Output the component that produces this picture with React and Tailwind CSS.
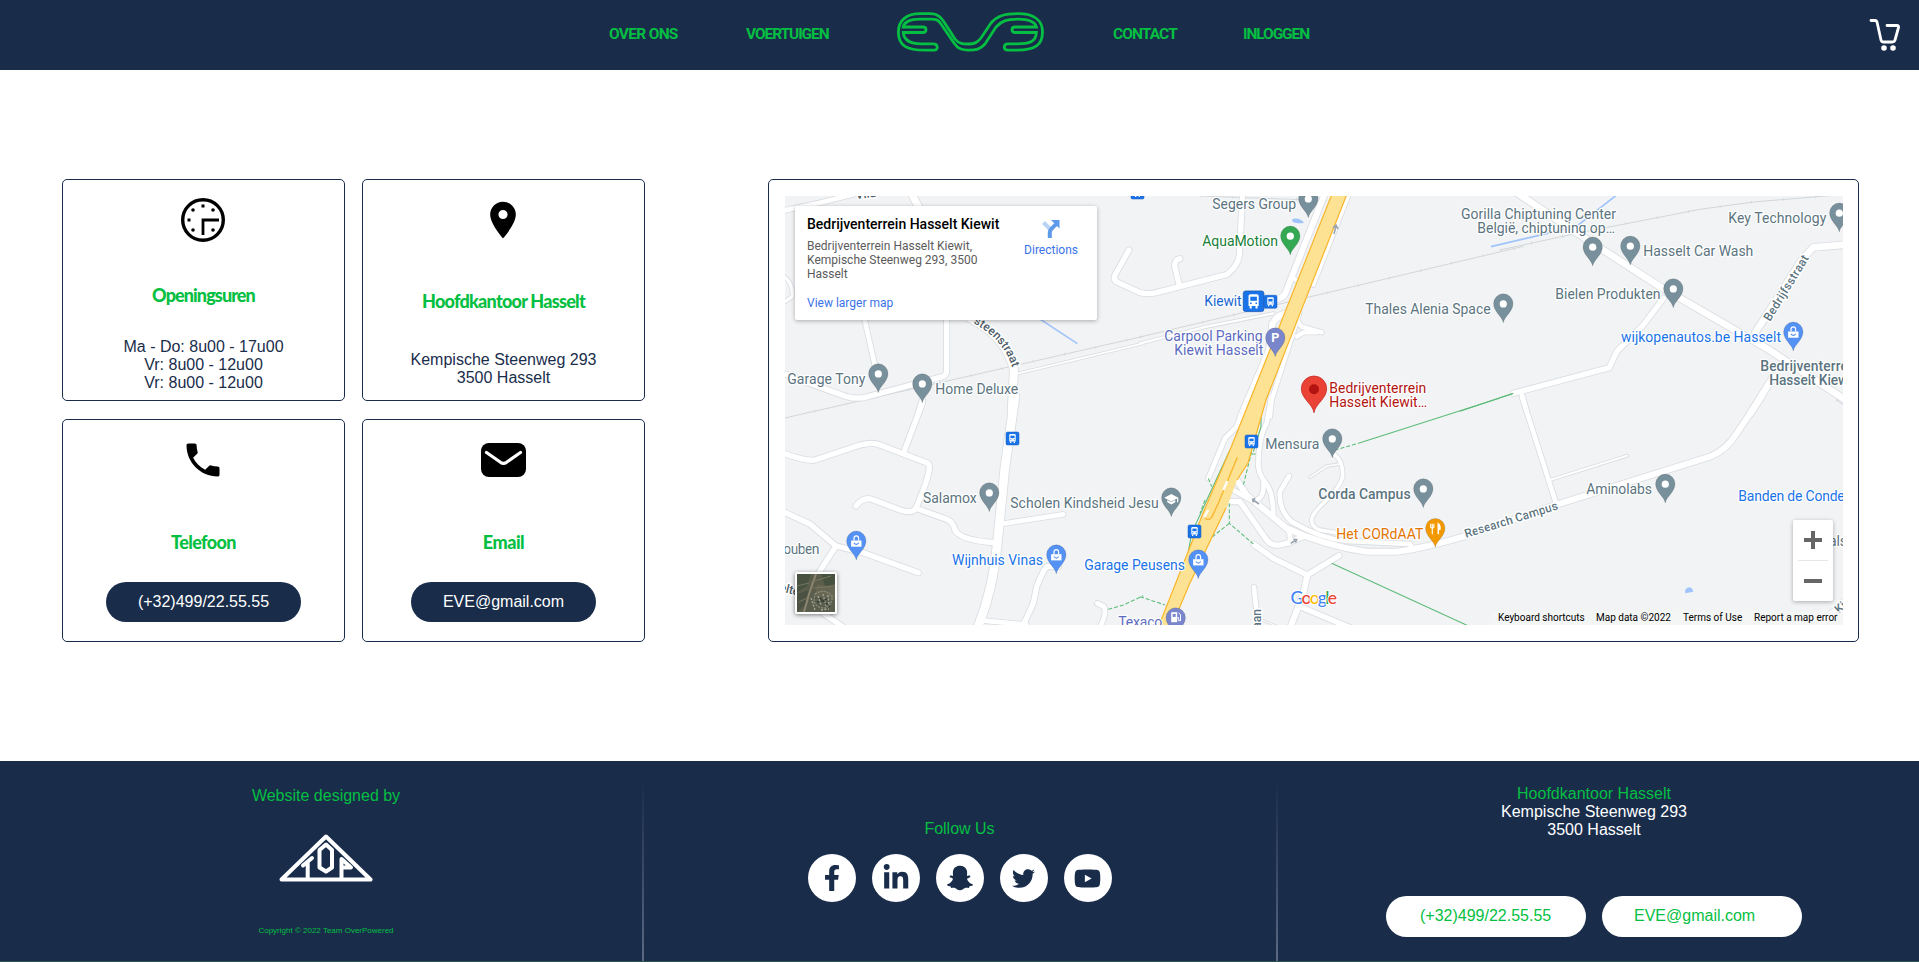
import React from "react";
import { MdLocationOn, MdPhone } from "react-icons/md";
import { FaFacebookF, FaLinkedinIn, FaSnapchatGhost, FaTwitter, FaYoutube } from "react-icons/fa";

/* Map geometry is stored per tile, three units to a pixel. */
const TILES = {
  A: "translate(760 170) scale(.33333)",
  B: "translate(1140 170) scale(.33333)",
  C: "translate(1500 170) scale(.33333)",
  D: "translate(760 400) scale(.33333)",
  E: "translate(1140 400) scale(.33333)",
  F: "translate(1500 400) scale(.33333)",
};

const ROADS = [
  ["A", "M60 124L180 98L300 68", 14],
  ["A", "M452 65L485 130", 22],
  ["A", "M70 318Q100 340 97 380L70 398", 10],
  ["A", "M312 440L350 610", 14],
  ["A", "M560 440V600Q560 615 548 620L330 678Q300 690 260 680Q200 660 70 610", 16],
  ["A", "M630 445Q740 500 762 600L755 725", 24],
  ["A", "M487 690L475 730", 16],
  ["A", "M775 610L1150 520", 5],
  ["A", "M1107 240L1065 315Q1058 330 1075 338L1140 368Q1170 375 1200 365", 16],
  ["B", "M60 365L262 313Q295 285 298 255L308 70", 16],
  ["B", "M118 345L104 290Q104 268 120 266", 16],
  ["B", "M0 520L200 470L400 430", 7],
  ["B", "M555 70L435 372Q428 385 405 388", 18],
  ["B", "M455 320L475 335", 12],
  ["B", "M628 70L520 345", 12],
  ["B", "M430 430Q395 440 400 470M440 425L395 460L385 540L300 740", 14],
  ["B", "M478 430L395 690L390 740M470 450L485 470L545 487M470 500L490 487L530 487", 13],
  ["C", "M50 68L240 195L480 350L800 535L1040 692", 20],
  ["C", "M490 385L430 465L350 545L328 593L40 670", 16],
  ["C", "M65 670L80 725", 14],
  ["C", "M1040 224L940 232L905 270L765 490", 20],
  ["C", "M820 620L750 732", 20],
  ["D", "M487 10L430 160", 16],
  ["D", "M65 158Q140 185 165 180L300 135Q340 125 360 135L500 188Q510 192 508 205Q505 230 490 270L468 325", 16],
  ["D", "M288 318Q310 290 335 298L420 330Q455 342 468 325L560 358Q580 366 585 390Q600 420 700 428", 16],
  ["D", "M765 -10L735 200L712 430Q700 570 650 690", 26],
  ["D", "M735 370L910 343", 14],
  ["D", "M65 333L150 372L228 438L310 458L475 518", 16],
  ["D", "M228 438L150 560L140 600L190 640L255 685", 16],
  ["D", "M895 500L860 500Q845 520 830 560L820 610L793 668", 16],
  ["D", "M670 662L800 674", 14],
  ["D", "M1012 610L1032 620Q1042 640 1018 685", 14],
  ["E", "M325 -10L290 80L255 115L205 235", 14],
  ["E", "M394 -10L380 70Q355 110 355 200Q360 230 375 245Q400 275 400 345", 14],
  ["E", "M370 240Q375 290 350 300", 14],
  ["E", "M290 240L320 285L350 310L440 385Q560 440 680 455L770 455Q850 445 970 410", 18],
  ["E", "M270 265L350 310", 14],
  ["E", "M265 305L300 305L380 420Q400 445 440 430L490 410", 16],
  ["E", "M440 385Q455 400 448 430", 14],
  ["E", "M447 228L420 275Q415 330 455 365Q540 415 620 423L810 432L820 450", 14],
  ["E", "M585 165Q610 185 608 230Q600 260 560 300Q510 345 515 365Q520 385 540 390L600 400", 11],
  ["E", "M510 232L560 198L600 192", 5],
  ["E", "M340 432L400 475L502 525L597 467", 16],
  ["E", "M502 525L490 580L475 620L448 690", 18],
  ["E", "M480 620L635 685", 16],
  ["E", "M342 562L350 640", 14],
  ["E", "M365 660L420 682", 3],
  ["F", "M-110 410L170 314L630 170Q680 150 710 100L785 -10", 18],
  ["F", "M66 -10L168 310", 14],
  ["F", "M150 240L382 167", 6],
  ["F", "M1040 600L950 685", 20],
];

const RAILS = [
  ["A", "M70 745L1150 499"],
  ["B", "M0 501L1150 229"],
  ["C", "M0 240L240 188L600 118L760 96L1000 76"],
  ["B", "M180 78L560 92"],
  ["C", "M1010 690L1035 708"],
];

const TREES = [
  ["B", "M960 724L1120 670", false],
  ["C", "M0 683L38 671", false],
  ["E", "M1080 -6L665 127", false],
  ["E", "M665 127L585 150", true],
  ["E", "M575 490L990 680", false],
  ["E", "M363 30V80L340 155", false],
  ["E", "M270 150Q200 300 155 400L145 455", false],
  ["E", "M335 155L310 255M335 162H350", true],
  ["E", "M268 310L268 370L340 432M268 370L205 420M205 235L215 260M195 300L180 340", true],
  ["E", "M0 590L75 615", true],
  ["D", "M1045 628L1090 615L1150 587", true],
];

const GREY = "#5b7480";
const LABELS = [
  ["Garage Tony", 787.3, 384, 78, GREY],
  ["Home Deluxe", 935.3, 394, 83, GREY],
  ["Segers Group", 1212.3, 209, 83.7, GREY],
  ["AquaMotion", 1202.3, 246, 75.7, "#188038"],
  ["Kiewit", 1204.3, 306, 37.3, "#1967d2"],
  ["Carpool Parking", 1164.3, 341, 98.3, "#5c6bc0"],
  ["Kiewit Hasselt", 1174.3, 355, 89, "#5c6bc0"],
  ["Thales Alenia Space", 1365.3, 314, 125.3, GREY],
  ["Bedrijventerrein", 1329.3, 393, 97, "#b31412"],
  ["Hasselt Kiewit…", 1329.3, 407, 97.7, "#b31412"],
  ["Gorilla Chiptuning Center", 1461, 219, 155, GREY],
  ["België, chiptuning op…", 1477.3, 233, 137.7, GREY],
  ["Hasselt Car Wash", 1643.3, 256, 110, GREY],
  ["Key Technology", 1728.3, 223, 98, GREY],
  ["Bielen Produkten", 1555.3, 299, 105.3, GREY],
  ["wijkopenautos.be Hasselt", 1621, 342, 160, "#1a73e8"],
  ["Bedrijventerrein", 1760.3, 371, 99, GREY, 500],
  ["Hasselt Kiewit", 1769.3, 385, 87, GREY, 500],
  ["Salamox", 923, 503, 53.7, GREY],
  ["Scholen Kindsheid Jesu", 1010.3, 508, 148.4, GREY],
  ["Houben", 774, 554, 45.5, GREY],
  ["Wijnhuis Vinas", 952, 565, 91, "#1a73e8"],
  ["Garage Peusens", 1084.3, 570, 100.7, "#1a73e8"],
  ["Texaco", 1118.3, 627, 44, "#5c6bc0"],
  ["Mensura", 1265.3, 449.3, 54, GREY],
  ["Corda Campus", 1318.3, 499, 92.3, GREY, 500],
  ["Het CORdAAT", 1336.3, 539, 87, "#e37400"],
  ["Aminolabs", 1586.3, 494, 65.7, GREY],
  ["Banden de Conde", 1738.3, 501, 106.5, "#1a73e8"],
  ["als", 1829, 546, 18, GREY],
];

const PINS = [
  [878.3, 392.7, "dot"], [922.3, 402.7, "dot"], [1308.3, 217.7, "dot"],
  [1290.3, 255, "dot", "#34a853"], [1275.3, 356.7, "P", "#7986cb"], [1503.3, 322.7, "dot"],
  [1592.7, 266, "dot"], [1630.3, 265, "dot"], [1673.3, 307.7, "dot"],
  [1793.3, 351, "bag", "#5491f5"], [1839.3, 232, "dot"], [989.3, 511.7, "dot"],
  [856.3, 560, "bag", "#5491f5"], [1056.3, 573.7, "bag", "#5491f5"], [1171.3, 516.7, "school"],
  [1332.3, 457.7, "dot"], [1423.3, 507.7, "dot"], [1435.3, 547.3, "food", "#f29900"],
  [1198.3, 578.7, "bag", "#5491f5"], [1175.7, 636.7, "fuel", "#7986cb"], [1665.3, 503, "dot"],
];

function Pin({ x, y, kind, color = "#78909c" }) {
  return (
    <g transform={`translate(${x} ${y})`}>
      <path d="M0 0C-1.2-6.5-9.7-11-9.7-19.2A9.7 9.7 0 0 1 9.7-19.2C9.7-11 1.2-6.5 0 0Z" fill={color} stroke="#000" strokeOpacity=".18" strokeWidth=".7" />
      {kind === "dot" && <circle cy="-18.8" r="3.6" fill="#fff" />}
      {kind === "P" && <text y="-14.6" textAnchor="middle" fontSize="12.5" fontWeight="700" fill="#fff">P</text>}
      {kind === "bag" && (
        <g>
          <path d="M-5.2-19.5H5.2V-13.3H-5.2Z" fill="#fff" />
          <path d="M-2.3-19.5V-21.8A2.3 2.3 0 0 1 2.3-21.8V-19.5" fill="none" stroke="#fff" strokeWidth="1.2" />
          <path d="M-2.5-17.2Q0-14 2.5-17.2" fill="none" stroke={color} strokeWidth="1.1" />
        </g>
      )}
      {kind === "school" && (
        <g fill="#fff">
          <path d="M-7-19L0-22.8L7-19L0-15.2Z" />
          <path d="M-4-16.8V-14.5L0-12.3L4-14.5V-16.8L0-14.6Z" />
          <path d="M5.8-19H7V-14.5H5.8Z" />
        </g>
      )}
      {kind === "food" && (
        <g stroke="#fff" fill="none" strokeWidth="1.1">
          <path d="M-4.6-23.5V-20Q-3-18.3-1.4-20V-23.5M-3-23.5V-13" />
          <path d="M3-13V-23.5Q5-22 4.6-18H3" fill="#fff" strokeWidth="1.5" />
        </g>
      )}
      {kind === "fuel" && (
        <g>
          <path d="M-4.5-24.5H1.5V-14.5H-4.5Z" fill="#fff" />
          <path d="M-3-22.8H0V-19.8H-3Z" fill={color} />
          <path d="M1.5-19H3V-16H4.8V-22L3-24" fill="none" stroke="#fff" strokeWidth="1" />
        </g>
      )}
    </g>
  );
}

function Transit({ x, y, s }) {
  return (
    <g transform={`translate(${x} ${y}) scale(${s / 13})`}>
      <rect width="13" height="13" rx="1.5" fill="#1a73e8" stroke="#1558b8" strokeWidth=".5" />
      <path d="M3.3 3.2Q3.3 2 4.5 2H8.5Q9.7 2 9.7 3.2V9.4H3.3Z" fill="#fff" />
      <path d="M4.4 3.6H8.6V6.2H4.4Z" fill="#1a73e8" />
      <path d="M4 9.4H5.3V11H4ZM7.7 9.4H9V11H7.7Z" fill="#fff" />
      <path d="M4.3 7.3H5.3V8.2H4.3ZM7.7 7.3H8.7V8.2H7.7Z" fill="#1a73e8" />
    </g>
  );
}

function MapCanvas() {
  return (
    <svg viewBox="785 196 1058 429" className="block h-[429px] w-[1058px] font-[Roboto,sans-serif]">
      <rect x="785" y="196" width="1058" height="429" fill="#f1f3f4" />
      {RAILS.map(([t, d], i) => (
        <g key={i} transform={TILES[t]} fill="none">
          <path d={d} stroke="#d3d6d9" strokeWidth="3" />
          <path d={d} stroke="#d3d6d9" strokeWidth="9" strokeDasharray="2 94" />
        </g>
      ))}
      <g stroke="#a0c3fb" strokeWidth="5" fill="none">
        <path transform={TILES.A} d="M838 446L952 521" />
        <path transform={TILES.C} d="M-27 230L130 193L235 165L350 75" />
      </g>
      <path transform={TILES.B} d="M456 148Q475 140 492 158Q475 162 458 156Z" fill="#a0c3fb" />
      <path transform={TILES.F} d="M556 580Q552 565 568 562Q578 564 580 575Z" fill="#a0c3fb" />
      {ROADS.map(([t, d, w], i) => (
        <path key={i} transform={TILES[t]} d={d} fill="none" stroke="#dadde1" strokeWidth={w + 5} strokeLinecap="round" strokeLinejoin="round" />
      ))}
      {ROADS.map(([t, d, w], i) => (
        <path key={i} transform={TILES[t]} d={d} fill="none" stroke="#fff" strokeWidth={w} strokeLinecap="round" strokeLinejoin="round" />
      ))}
      {TREES.map(([t, d, dash], i) => (
        <path key={i} transform={TILES[t]} d={d} fill="none" stroke="#5dbb79" strokeWidth="3.2" strokeDasharray={dash ? "12 6" : undefined} />
      ))}
      <path d="M1332 194L1250 400L1230 450L1203 513L1190 547L1158 628H1171L1189 585L1227 507L1237 480L1248 463L1266 400L1347 194Z" fill="#fde293" />
      <path d="M1332 194L1250 400L1230 450L1203 513L1190 547L1158 628M1347 194L1266 400L1248 463L1237 480M1226 508L1189 585L1171 628" fill="none" stroke="#f9b52a" strokeWidth="1.2" />
      <g transform={TILES.E} fill="none">
        <path d="M292 172L235 310L215 352Q205 365 193 352" stroke="#f9b52a" strokeWidth="4" />
        <path d="M262 243L250 270M205 330L192 352" stroke="#fff" strokeWidth="7" />
        <path d="M357 312L340 300M346 296L338 298L340 307M452 430L468 420M460 418L470 419L466 428" stroke="#9aa5b1" strokeWidth="5" />
      </g>
      <path d="M1334 234L1336 226M1333 228L1336 225L1338 229" stroke="#9aa5b1" strokeWidth="1.6" fill="none" />

      <g fontSize="12" fontWeight="500" fill={GREY} stroke="#fff" strokeWidth="3" strokeLinejoin="round" style={{ paintOrder: "stroke" }}>
        <path id="street" d="M973 323Q1005 340 1013 370" fill="none" stroke="none" />
        <text fill="#4d5b66"><textPath href="#street">steenstraat</textPath></text>
        <text transform="translate(1466 538) rotate(-17.3)" textLength="97">Research Campus</text>
        <text transform="translate(1770 322) rotate(-58.5)" textLength="75">Bedrijfsstraat</text>
        <text transform="translate(1261 609) rotate(-90)" textAnchor="end">laan</text>
        <text transform="translate(1839 614) rotate(-42)">Kiewit</text>
        <text transform="translate(779 591) rotate(14)" fill="#4d5b66">elte</text>
        <text transform="translate(856 199) rotate(-6)" fill="#4d5b66">Vild</text>
        <text transform="translate(818 609) rotate(38)" fontSize="11" fill="#4d5b66">s</text>
      </g>
      {LABELS.map(([text, x, y, w, color, weight = 400], i) => (
        <text key={i} x={x} y={y} textLength={w} fontSize="14" fontWeight={weight} fill={color} stroke="#fff" strokeWidth="2.5" strokeOpacity=".9" strokeLinejoin="round" style={{ paintOrder: "stroke" }}>
          {text}
        </text>
      ))}
      {PINS.map(([x, y, kind, color], i) => <Pin key={i} x={x} y={y} kind={kind} color={color} />)}
      <g transform="translate(1314 412.7)">
        <path d="M0 0C-1.5-9-12.7-14-12.7-24A12.7 12.7 0 0 1 12.7-24C12.7-14 1.5-9 0 0Z" fill="#ea4335" stroke="#c5221f" strokeWidth=".7" />
        <circle cy="-23.4" r="5" fill="#b31412" />
      </g>
      <Transit x={1243.3} y={291} s={20.6} />
      <Transit x={1264} y={295.3} s={13} />
      <Transit x={1006} y={432} s={13} />
      <Transit x={1245} y={435} s={13} />
      <Transit x={1188} y={525} s={13} />
      <Transit x={1131} y={186} s={13} />

      <g fontFamily="Lato, sans-serif" stroke="#fff" strokeWidth="2" style={{ paintOrder: "stroke" }}>
        <text x="1290.5" y="603.5" fontSize="17.5" textLength="46.5" fontWeight="500">
          <tspan fill="#4285f4">G</tspan><tspan fill="#ea4335">o</tspan><tspan fill="#fbbc04">o</tspan><tspan fill="#4285f4">g</tspan><tspan fill="#34a853">l</tspan><tspan fill="#ea4335">e</tspan>
        </text>
      </g>
    </svg>
  );
}

function Satellite() {
  return (
    <svg viewBox="0 0 38 38" className="block size-[38px]">
      <rect width="38" height="38" fill="#5a5d4c" />
      <path d="M0 0H14L10 12L0 18ZM24 0H38V10L28 12Z" fill="#46523f" />
      <path d="M0 20L12 16L9 30L0 38Z" fill="#4c5243" />
      <path d="M20 10L38 14V26L18 22Z" fill="#666653" />
      <path d="M19 0L12 20L7 38" stroke="#8b8570" strokeWidth="2" fill="none" />
      <path d="M14 8L34 2M16 14L38 12M0 12L12 9M2 28L10 24" stroke="#79775f" strokeWidth="1" fill="none" />
      <path d="M18 20Q28 14 35 22Q36 30 28 34Q18 34 17 26Z" fill="none" stroke="#91917f" strokeWidth="1.2" strokeDasharray="2 1" />
      <path d="M21 22L24 31M26 20L29 32M31 21L32 30M14 24L18 36M24 36L32 35" stroke="#a3a796" strokeWidth="1.4" strokeDasharray="2 1.5" fill="none" />
      <path d="M20 28L30 25M23 24L33 33" stroke="#2f3b36" strokeWidth="1.5" strokeDasharray="2 2" fill="none" />
    </svg>
  );
}

function MapPanel() {
  return (
    <section className="h-[463px] w-[1091px] rounded-[5px] border border-[#192d4b] py-4 pr-[15px] pl-4">
      <div className="relative h-[429px] w-[1058px] overflow-hidden font-[Roboto,sans-serif]">
        <MapCanvas />
        <div className="absolute top-2.5 left-2.5 flex h-[114px] w-[302px] justify-between rounded-[2px] bg-white pt-[10px] pr-[19px] pl-3 shadow-[0_1px_4px_rgba(0,0,0,0.3)]">
          <div className="w-[195px]">
            <h3 className="text-[14px] leading-4 font-medium whitespace-nowrap text-black">Bedrijventerrein Hasselt Kiewit</h3>
            <p className="mt-[7px] w-[180px] text-[12px] leading-[14px] text-[#5b5b5b]">Bedrijventerrein Hasselt Kiewit, Kempische Steenweg 293, 3500 Hasselt</p>
            <a className="mt-[15px] block text-[12px] leading-[14px] text-[#3a73e8]">View larger map</a>
          </div>
          <div className="flex flex-col items-center pt-1">
            <svg viewBox="0 0 18 18" className="size-[18px]">
              <path d="M1.5 2.5L8 9" stroke="#b8d3f6" strokeWidth="4" />
              <path d="M7.8 18V12Q8 9.500 14.500 4" fill="none" stroke="#5d9bea" strokeWidth="4" />
              <path d="M9 0H17.500V8.500Z" fill="#5d9bea" />
            </svg>
            <span className="mt-[5px] text-[12px] leading-[14px] text-[#3a73e8]">Directions</span>
          </div>
        </div>
        <div className="absolute bottom-[11px] left-2.5 rounded-[2px] border-2 border-white shadow-[0_1px_4px_rgba(0,0,0,0.5)]"><Satellite /></div>
        <div className="absolute right-2.5 bottom-6 flex h-[81px] w-10 flex-col items-center rounded-[2px] bg-white shadow-[0_1px_4px_rgba(0,0,0,0.3)]">
          <svg viewBox="0 0 18 18" className="my-[11px] size-[18px]"><path d="M7 0H11V7H18V11H11V18H7V11H0V7H7Z" fill="#666" /></svg>
          <div className="h-px w-[30px] bg-[#e6e6e6]" />
          <svg viewBox="0 0 18 18" className="my-[11px] size-[18px]"><path d="M0 7H18V11H0Z" fill="#666" /></svg>
        </div>
        <div className="absolute right-0 bottom-0 flex h-[14px] items-center gap-[12px] bg-[#f5f5f5]/70 pr-[6px] pl-[6px] text-[10px] leading-[14px] whitespace-nowrap text-black">
          <span className="w-[86px]">Keyboard shortcuts</span>
          <span className="w-[75px]">Map data ©2022</span>
          <span className="w-[59px]">Terms of Use</span>
          <span className="w-[83px]">Report a map error</span>
        </div>
      </div>
    </section>
  );
}

function Logo() {
  return (
    <svg viewBox="0 0 147 40" className="h-10 w-[147px]">
      <path fill="none" stroke="#05bf42" strokeWidth="2.8" d="M37 38.200H28C10 38.200 1.400 34 1.400 20C1.400 8 10 1.700 23 1.700H33C41 1.700 44 5 49 13L58 27C62 32 66 32 71.500 32C77 32 80 31 84 26L94 11C100 4 107 1.700 121 1.700C138 1.700 145.500 9 145.500 20C145.500 33 138 38.200 120 38.200H111C106 38.200 106 31.800 111 31.800H120C132 31.800 139 30 139.400 20.500H118C114 20.500 114 15 118 15H139.400C138 10 133 7.200 121 7.200C110 7.200 104 9 99 15L88 32C83 37.500 79 38.200 71.500 38.200C65 38.200 61 37 57 31L44 12C41 7.500 39 7.200 34 7.200H23C12 7.200 7 11 6.200 15H26C30 15 30 20.500 26 20.500H6.200C7 28 12 31.800 24 31.800H36C41.500 31.800 41.500 38.200 37 38.200Z" />
    </svg>
  );
}

function Card({ icon, title, titleClass, children }) {
  return (
    <article className="flex h-full w-[283px] flex-col items-center rounded-[5px] border border-[#192d4b] text-[#192d4b]">
      <div className="mt-[18px] flex h-[44px] items-center justify-center pr-px text-black">{icon}</div>
      <h2 className={titleClass + " font-[Lato,sans-serif] text-[18px] leading-6 font-black whitespace-nowrap text-[#05bf42]"}>{title}</h2>
      {children}
    </article>
  );
}

const ClockIcon = () => (
  <svg viewBox="0 0 44 44" className="size-11">
    <circle cx="22" cy="22" r="20.300" fill="none" stroke="#000" strokeWidth="3.400" />
    <path d="M38 22H22V37" fill="none" stroke="#000" strokeWidth="2.800" />
    <path d="M20.500 6.500H23.500V9.500H20.500ZM6.500 20.500H9.500V23.500H6.500Z" />
    <circle cx="12" cy="12" r="1.800" /><circle cx="32" cy="12" r="1.800" /><circle cx="12" cy="32" r="1.800" /><circle cx="32" cy="32" r="1.800" />
  </svg>
);

const MailIcon = () => (
  <svg viewBox="0 0 45 34" className="h-[34px] w-[45px]">
    <rect width="45" height="34" rx="8" />
    <path d="M5.500 9.500L19.500 19.300Q22.500 21.300 25.500 19.300L39.500 9.500" fill="none" stroke="#fff" strokeWidth="3.200" strokeLinecap="round" />
  </svg>
);

const TopLogo = () => (
  <svg viewBox="0 0 94 48" className="h-12 w-[94px]" fill="none" stroke="#fff" strokeWidth="4" strokeLinejoin="round" strokeLinecap="round">
    <path d="M2.500 45.500L47 2.500L91.500 45.500Z" />
    <path d="M47 10.500L53 16V33.500L47 37.500L40.500 33.500V16Z" />
    <path d="M24 31.500L33 24M28.700 28V44" />
    <path d="M62.500 44V25L72 33.500H63" />
  </svg>
);

const SOCIALS = [
  [FaFacebookF, "size-[26px]"],
  [FaLinkedinIn, "size-[28px]"],
  [FaSnapchatGhost, "size-[26px]"],
  [FaTwitter, "size-[23px]"],
  [FaYoutube, "size-[27px]"],
];

const Divider = () => <div className="mt-5 h-[180px] w-0.5 bg-gradient-to-b from-[#192d4b] to-[#5d6982]" />;

export default function App() {
  return (
    <div className="flex h-[962px] w-[1919px] flex-col overflow-hidden bg-white font-['Liberation_Sans',Arial,sans-serif] text-[16px] leading-[18px]">
      <header className="flex h-[70px] shrink-0 items-center justify-between bg-[#192d4b] pr-[18px] pl-[609px]">
        <nav className="flex h-full items-center pb-0.5 font-[Roboto,sans-serif] text-[15.500px] font-bold whitespace-nowrap text-[#05bf42]">
          <a className="w-[137px] tracking-[-0.700px]">OVER ONS</a>
          <a className="w-[151px] tracking-[-1.100px]">VOERTUIGEN</a>
          <div className="-mt-1 w-[216px]"><Logo /></div>
          <a className="w-[130px] tracking-[-0.900px]">CONTACT</a>
          <a className="tracking-[-1.100px]">INLOGGEN</a>
        </nav>
        <svg viewBox="0 0 32 34" className="h-[34px] w-8" fill="none" stroke="#fff" strokeWidth="2.800" strokeLinecap="round" strokeLinejoin="round">
          <path d="M2 2.500H6Q7.500 2.500 8 4L12 22Q12.400 24 14.500 24H23.500Q25.500 24 26 22L29.500 9.500Q30 7.500 28 7.500H18" />
          <circle cx="15" cy="30" r="1.400" fill="#fff" /><circle cx="24" cy="30" r="1.400" fill="#fff" />
        </svg>
      </header>

      <main className="flex h-[691px] shrink-0 justify-between pt-[109px] pr-[60px] pl-[62px]">
        <section className="grid h-[463px] grid-cols-[283px_283px] grid-rows-[222px_223px] gap-x-[17px] gap-y-[18px]">
          <Card icon={<ClockIcon />} title="Openingsuren" titleClass="mt-[41px] tracking-[-0.900px]">
            <p className="mt-[31px] text-center">Ma - Do: 8u00 - 17u00<br />Vr: 8u00 - 12u00<br />Vr: 8u00 - 12u00</p>
          </Card>
          <Card icon={<MdLocationOn size={44} />} title="Hoofdkantoor Hasselt" titleClass="mt-[47px] tracking-[-0.750px]">
            <p className="mt-[38px] text-center">Kempische Steenweg 293<br />3500 Hasselt</p>
          </Card>
          <Card icon={<MdPhone size={44} />} title="Telefoon" titleClass="mt-[48px] tracking-[-0.600px]">
            <a className="mt-[28px] flex h-10 w-[195px] items-center justify-center rounded-[20px] bg-[#192d4b] text-white">(+32)499/22.55.55</a>
          </Card>
          <Card icon={<MailIcon />} title="Email" titleClass="mt-[48px] tracking-[-0.500px]">
            <a className="mt-[28px] flex h-10 w-[185px] items-center justify-center rounded-[20px] bg-[#192d4b] text-white">EVE@gmail.com</a>
          </Card>
        </section>
        <MapPanel />
      </main>

      <footer className="flex h-[201px] shrink-0 justify-center border-b border-[#2b5650] bg-[#192d4b] text-[#05bf42]">
        <div className="flex w-[633px] flex-col items-center pt-[26px] pl-0.5">
          <p>Website designed by</p>
          <div className="mt-[29px]"><TopLogo /></div>
          <p className="mt-[44px] text-[8px] leading-[10px]">Copyright © 2022 Team OverPowered</p>
        </div>
        <Divider />
        <div className="flex w-[632px] flex-col items-center pt-[59px]">
          <p>Follow Us</p>
          <div className="mt-[16px] flex gap-4">
            {SOCIALS.map(([Icon, size], i) => (
              <a key={i} className="flex size-12 items-center justify-center rounded-full bg-white text-[#192d4b]"><Icon className={size} /></a>
            ))}
          </div>
        </div>
        <Divider />
        <div className="flex w-[633px] flex-col items-center pt-[24px] text-center">
          <p>Hoofdkantoor Hasselt</p>
          <p className="text-white">Kempische Steenweg 293<br />3500 Hasselt</p>
          <div className="mt-[57px] flex gap-4">
            <a className="flex h-[41px] w-[200px] items-center rounded-[20.500px] bg-white pb-0.5 pl-[34px]">(+32)499/22.55.55</a>
            <a className="flex h-[41px] w-[200px] items-center rounded-[20.500px] bg-white pb-0.5 pl-8">EVE@gmail.com</a>
          </div>
        </div>
      </footer>
    </div>
  );
}
